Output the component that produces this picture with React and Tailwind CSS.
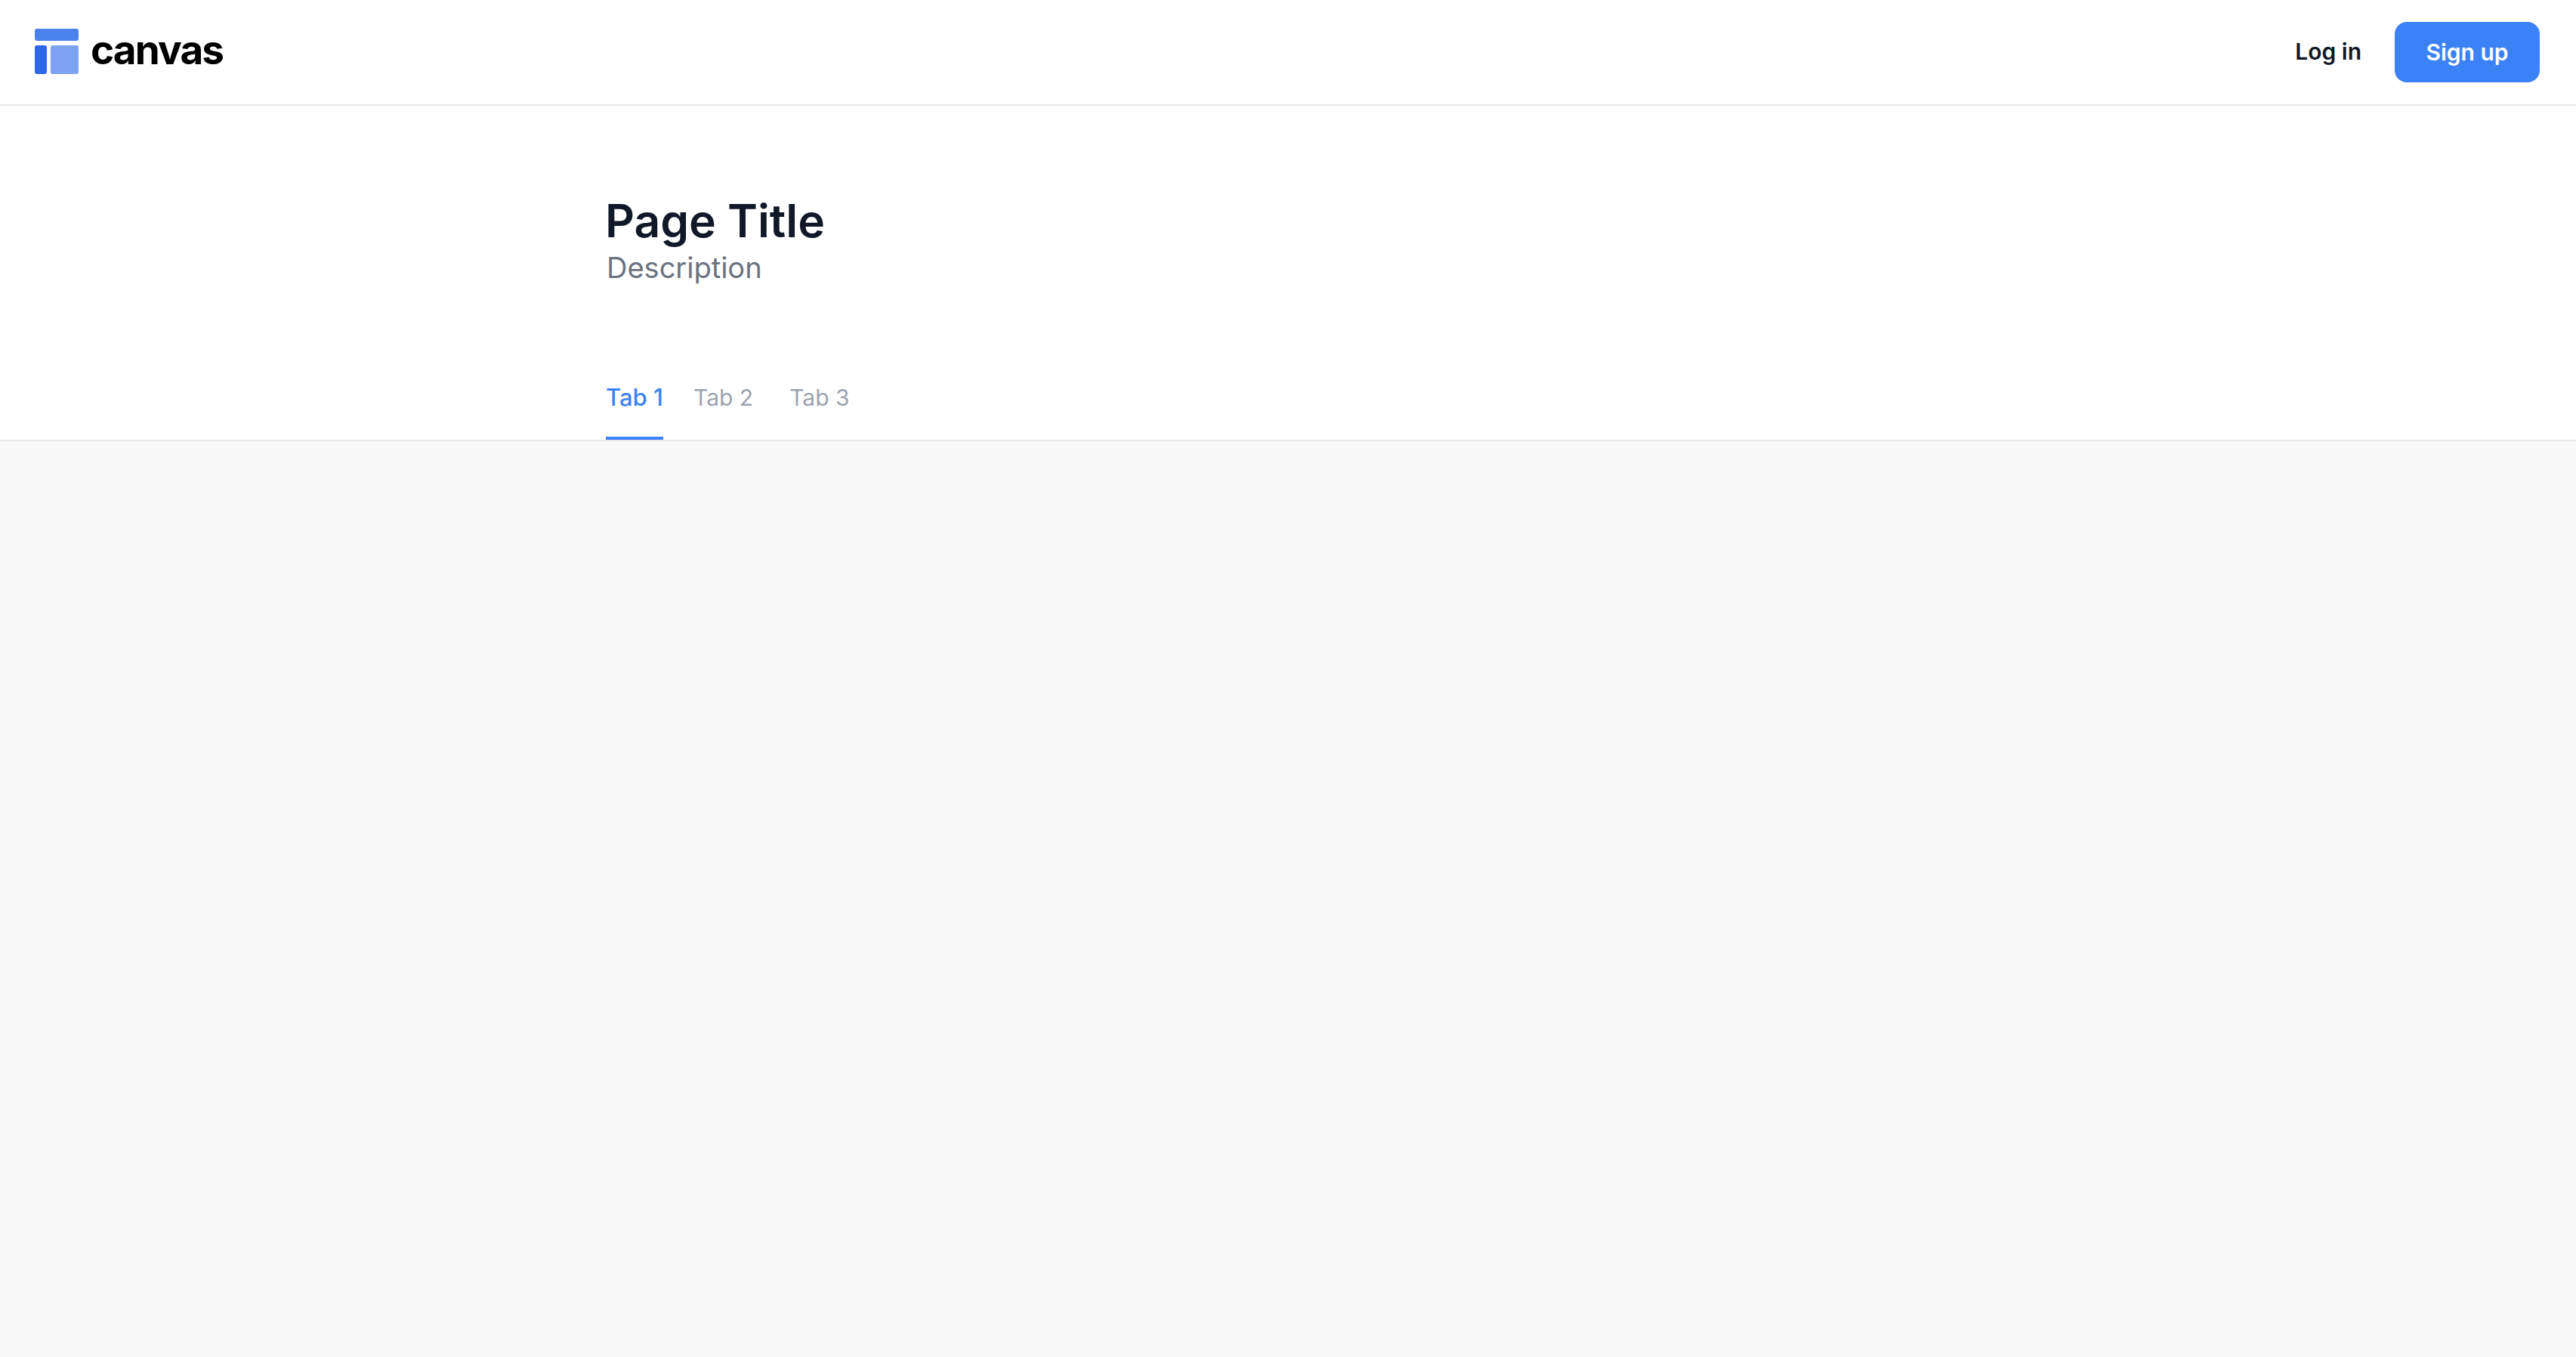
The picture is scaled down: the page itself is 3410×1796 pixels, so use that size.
export default function App() {
  const tabs = ["Tab 1", "Tab 2", "Tab 3"];

  return (
    <div className="min-h-screen flex flex-col bg-[#f9f9f9] font-['Inter',sans-serif]">
      {/* Navbar */}
      <header className="h-[140px] flex items-center justify-between bg-white border-b-2 border-[#e8e8e8] pl-[46px] pr-[48px]">
        <div className="flex items-center gap-[16px]">
          <svg width="58" height="60" viewBox="0 0 58 60" className="block mb-[2px]">
            <rect x="0" y="0" width="58" height="16" rx="3" fill="#4c82ee" />
            <rect x="0" y="22" width="16" height="38" rx="3" fill="#2f66ea" />
            <rect x="21" y="22" width="37" height="38" rx="3" fill="#7ea3f2" />
          </svg>
          <span className="text-[53px] leading-none font-bold tracking-[-0.035em] text-black pb-[6px]">canvas</span>
        </div>
        <div className="flex items-center gap-[44px]">
          <button className="text-[30px] font-semibold text-[#111827] pb-[2px]">Log in</button>
          <button className="w-[192px] h-[80px] rounded-[16px] bg-[#3b82f6] text-[30px] font-semibold text-white">Sign up</button>
        </div>
      </header>

      {/* Page header */}
      <div className="bg-white border-b-2 border-[#e8e8e8] pl-[802px] pt-[114px]">
        <h1 className="text-[60.5px] leading-[76px] font-semibold text-[#111827] -ml-[1px]">Page Title</h1>
        <p className="text-[38px] leading-[48px] text-[#6b7280] pl-[1px]">Description</p>
        <nav className="flex mt-[118px]">
          {tabs.map((tab, i) => (
            <a
              key={tab}
              className={
                i === 0
                  ? "w-[76px] h-[86px] pt-[10px] mr-[40px] text-[31px] leading-[40px] font-medium whitespace-nowrap text-[#3b82f6] border-b-4 border-[#3b82f6]"
                  : "h-[86px] pt-[10px] mr-[48px] text-[30px] leading-[40px] text-[#9ca3af]"
              }
            >
              {tab}
            </a>
          ))}
        </nav>
      </div>

      <main className="flex-1" />
    </div>
  );
}
